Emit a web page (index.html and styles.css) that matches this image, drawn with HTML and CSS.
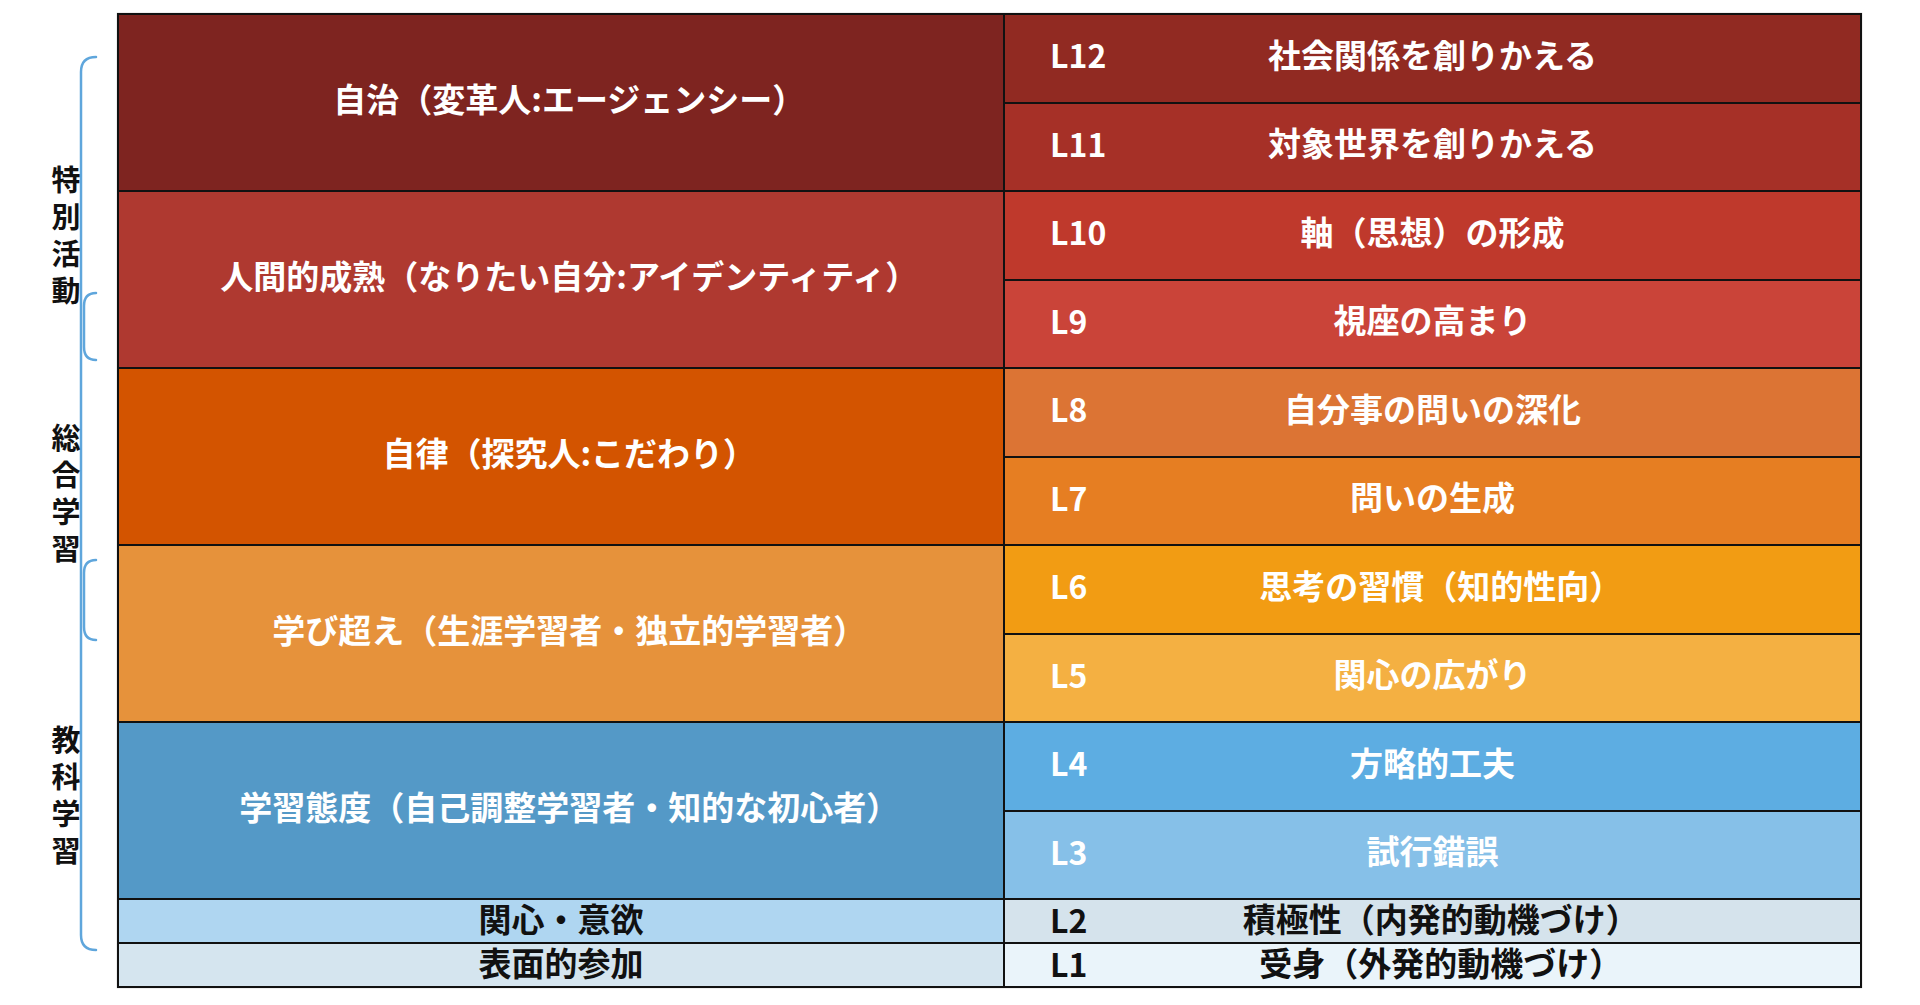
FILE: index.html
```html
<!DOCTYPE html>
<html lang="ja">
<head>
<meta charset="utf-8">
<title>学びのレベル</title>
<link rel="stylesheet" href="styles.css">
</head>
<body>
<div class="page">
  <aside class="side">
    <svg class="braces" width="117" height="1005" viewBox="0 0 117 1005">
      <path d="M96 57 Q81 57 81 72 L81 935 Q81 950 96 950" />
      <path d="M96 293 Q84 293 84 306 L84 347 Q84 360 96 360" />
      <path d="M96 560 Q84 560 84 573 L84 627 Q84 640 96 640" />
    </svg>
    <div class="label label-toku">特別活動</div>
    <div class="label label-sogo">総合学習</div>
    <div class="label label-kyoka">教科学習</div>
  </aside>
  <div class="chart">
    <div class="cell stage c-jichi">自治（変革人:エージェンシー<span class="end">）</span></div>
    <div class="cell level c-l12"><span class="lv">L12</span><span class="txt">社会関係を創りかえる</span></div>
    <div class="cell level c-l11"><span class="lv">L11</span><span class="txt">対象世界を創りかえる</span></div>

    <div class="cell stage c-ningen">人間的成熟（なりたい自分:アイデンティティ<span class="end">）</span></div>
    <div class="cell level c-l10"><span class="lv">L10</span><span class="txt">軸（思想）の形成</span></div>
    <div class="cell level c-l9"><span class="lv">L9</span><span class="txt">視座の高まり</span></div>

    <div class="cell stage c-jiritsu">自律（探究人:こだわり<span class="end">）</span></div>
    <div class="cell level c-l8"><span class="lv">L8</span><span class="txt">自分事の問いの深化</span></div>
    <div class="cell level c-l7"><span class="lv">L7</span><span class="txt">問いの生成</span></div>

    <div class="cell stage c-manabi">学び超え（生涯学習者・独立的学習者<span class="end">）</span></div>
    <div class="cell level c-l6"><span class="lv">L6</span><span class="txt">思考の習慣（知的性向<span class="end">）</span></span></div>
    <div class="cell level c-l5"><span class="lv">L5</span><span class="txt">関心の広がり</span></div>

    <div class="cell stage c-taido">学習態度（自己調整学習者・知的な初心者<span class="end">）</span></div>
    <div class="cell level c-l4"><span class="lv">L4</span><span class="txt">方略的工夫</span></div>
    <div class="cell level c-l3"><span class="lv">L3</span><span class="txt">試行錯誤</span></div>

    <div class="cell small dark c-kanshin">関心・意欲</div>
    <div class="cell level dark c-l2"><span class="lv">L2</span><span class="txt">積極性（内発的動機づけ<span class="end">）</span></span></div>

    <div class="cell small dark c-hyomen">表面的参加</div>
    <div class="cell level dark c-l1"><span class="lv">L1</span><span class="txt">受身（外発的動機づけ<span class="end">）</span></span></div>
  </div>
</div>
</body>
</html>
```

FILE: styles.css
```css
* { box-sizing: border-box; }

html, body {
  margin: 0;
  padding: 0;
  background: #ffffff;
}

body {
  font-family: "Noto Sans CJK JP", "Noto Sans", sans-serif;
  font-weight: 700;
  color: #ffffff;
}

.page {
  display: flex;
  width: 1920px;
  height: 1005px;
}

.side {
  position: relative;
  width: 117px;
  flex: 0 0 117px;
}

.braces {
  position: absolute;
  left: 0;
  top: 0;
}

.braces path {
  fill: none;
  stroke: #5fa6dc;
  stroke-width: 2.5;
  stroke-linecap: round;
}

.label {
  position: absolute;
  left: 51px;
  width: 30px;
  writing-mode: vertical-rl;
  text-orientation: upright;
  font-size: 29px;
  line-height: 30px;
  letter-spacing: 8px;
  color: #111111;
}

.label-toku { top: 165px; }
.label-sogo { top: 423px; }
.label-kyoka { top: 725px; }

.chart {
  margin-top: 13px;
  width: 1745px;
  height: 975px;
  border: 2px solid #111111;
  background: #111111;
  display: grid;
  grid-template-columns: 884px 855px;
  grid-template-rows: repeat(10, 86.5px) 42px 42px;
  gap: 2px;
  box-shadow: 0 0 1px rgba(0, 0, 0, 0.4);
}

.cell {
  display: flex;
  align-items: center;
  justify-content: center;
  font-size: 33px;
  line-height: 1;
  white-space: nowrap;
  padding-bottom: 8px;
}

.end {
  margin-right: -0.5em;
}

.small,
.dark.level {
  padding-bottom: 5px;
}

.stage {
  grid-column: 1;
  grid-row: span 2;
}

.small {
  grid-column: 1;
}

.level {
  grid-column: 2;
  display: grid;
  grid-template-columns: 1fr auto 1fr;
  align-items: center;
}

.level .lv {
  justify-self: start;
  margin-left: 45px;
  font-size: 32px;
}

.level .txt {
  justify-self: center;
}

.dark { color: #111111; }

.c-jichi   { background: #7e2420; }
.c-l12     { background: #912a22; }
.c-l11     { background: #a63027; }

.c-ningen  { background: #af3930; }
.c-l10     { background: #bf392c; }
.c-l9      { background: #ca4439; }

.c-jiritsu { background: #d35400; }
.c-l8      { background: #dc7434; }
.c-l7      { background: #e67e22; }

.c-manabi  { background: #e6923b; }
.c-l6      { background: #f29c13; }
.c-l5      { background: #f4b042; }

.c-taido   { background: #5499c7; }
.c-l4      { background: #5dade2; }
.c-l3      { background: #86c0e8; }

.c-kanshin { background: #afd6f1; }
.c-l2      { background: #d5e3ec; }

.c-hyomen  { background: #d5e5ef; }
.c-l1      { background: #eaf4fa; }
```
